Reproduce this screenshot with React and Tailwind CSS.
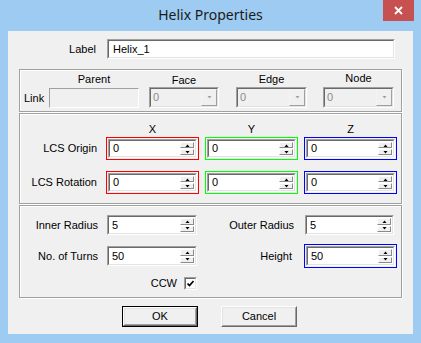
import React from "react";

const sunkenOuter = "border border-t-[#a0a0a0] border-l-[#a0a0a0] border-r-white border-b-white";
const sunkenInner = "border border-t-[#696969] border-l-[#696969] border-r-[#e3e3e3] border-b-[#e3e3e3]";
const etched = "border border-[#a0a0a0] shadow-[inset_1px_1px_0_#fff,1px_1px_0_#fff]";

const Arrow = ({ up, color = "#000" }) => (
  <svg width="5" height="3" viewBox="0 0 5 3">
    <polygon points={up ? "0.5,3 2.5,0.5 4.5,3" : "0.5,0 4.5,0 2.5,2.5"} fill={color} />
  </svg>
);

const SpinBtn = ({ up }) => (
  <div className="flex flex-1 items-center justify-center border border-t-white border-l-white border-r-[#8a8a8a] border-b-[#8a8a8a] bg-[#f0f0f0]">
    <Arrow up={up} />
  </div>
);

function SpinEdit({ value, className }) {
  return (
    <div className={`flex ${sunkenOuter} ${className}`}>
      <div className={`flex flex-1 bg-white ${sunkenInner}`}>
        <span className="flex flex-1 items-center pl-[3px]">{value}</span>
        <div className="flex w-[16px] flex-col gap-px p-px">
          <SpinBtn up />
          <SpinBtn />
        </div>
      </div>
    </div>
  );
}

// colour ring round a spin edit (red/green/blue axes)
function ColorBox({ value, ring, className }) {
  return (
    <div className={`flex w-[93px] border bg-[#f0f0f0] p-px ${ring} ${className}`}>
      <SpinEdit value={value} className="flex-1" />
    </div>
  );
}

function Combo() {
  return (
    <div className={`flex h-[21px] ${sunkenOuter}`}>
      <div className={`flex flex-1 bg-[#f0f0f0] ${sunkenInner}`}>
        <span className="flex flex-1 items-center pl-[2px] text-[#8a8a8a]">0</span>
        <div className="flex w-[16px] items-center justify-center border border-t-[#f4f4f4] border-l-[#f4f4f4] border-r-[#a0a0a0] border-b-[#a0a0a0] bg-[#f0f0f0]">
          <Arrow color="#a0a0a0" />
        </div>
      </div>
    </div>
  );
}

function Button({ children, isDefault }) {
  return (
    <div className={`h-[21px] w-[76px] ${isDefault ? "border border-black" : ""}`}>
      <div className="flex h-full border border-t-white border-l-white border-r-[#696969] border-b-[#696969]">
        <div className="flex flex-1 items-center justify-center border border-t-[#e3e3e3] border-l-[#e3e3e3] border-r-[#a0a0a0] border-b-[#a0a0a0] bg-[#f0f0f0]">
          {children}
        </div>
      </div>
    </div>
  );
}

export default function App() {
  return (
    <div className="flex h-[343px] w-[421px] flex-col bg-[#9dcbf2] font-['Liberation_Sans',Arial,sans-serif] text-[11px] leading-[13px] text-black">
      {/* title bar */}
      <div className="grid h-[31px] grid-cols-[1fr_auto_1fr]">
        <div />
        <div className="pt-[5px] font-['Noto_Sans',sans-serif] text-[14px] leading-[20px] text-[#1b1b1b]">
          Helix Properties
        </div>
        <div className="flex justify-end pr-[7px]">
          <div className="flex h-[21px] w-[31px] items-center justify-center bg-[#c75050]">
            <svg width="9" height="9" viewBox="0 0 9 9">
              <path d="M1 1 L8 8 M8 1 L1 8" stroke="#fff" strokeWidth="1.8" />
            </svg>
          </div>
        </div>
      </div>

      {/* client area */}
      <div className="mx-[8px] flex h-[303px] w-[405px] flex-col bg-[#f0f0f0]">
        <div className="mt-[8px] flex h-[20px] items-center">
          <span className="w-[88px] text-right">Label</span>
          <div className={`ml-[11px] flex h-[20px] w-[288px] ${sunkenOuter}`}>
            <div className={`flex flex-1 items-center bg-white pl-[4px] ${sunkenInner}`}>Helix_1</div>
          </div>
        </div>

        {/* link group */}
        <div className={`ml-[11px] mt-[10px] h-[43px] w-[383px] ${etched}`}>
          <div className="flex pl-[4px] pt-[2px]">
            <div className="flex w-[25px] flex-col">
              <div className="h-[15px]" />
              <div className="mt-[1px] flex h-[20px] items-center">Link</div>
            </div>
            <div className="flex w-[90px] flex-col">
              <div className="h-[15px] text-center leading-[15px]">Parent</div>
              <div className="mt-[1px] h-[20px] border border-t-[#a0a0a0] border-l-[#a0a0a0] border-r-white border-b-white bg-[#f0f0f0]" />
            </div>
            <div className="ml-[10px] flex w-[70px] flex-col">
              <div className="h-[15px] text-center leading-[17px]">Face</div>
              <Combo />
            </div>
            <div className="ml-[17px] flex w-[71px] flex-col">
              <div className="h-[15px] text-center leading-[15px]">Edge</div>
              <Combo />
            </div>
            <div className="ml-[16px] flex w-[71px] flex-col">
              <div className="h-[15px] text-center leading-[12px]">Node</div>
              <Combo />
            </div>
          </div>
        </div>

        {/* LCS group */}
        <div className={`ml-[11px] mt-[1px] h-[91px] w-[383px] ${etched}`}>
          <div className="flex flex-col pt-[8px]">
            <div className="flex h-[15px] gap-[6px] leading-[15px]">
              <div className="w-[80px]" />
              <div className="w-[93px] text-center">X</div>
              <div className="w-[93px] text-center">Y</div>
              <div className="w-[93px] text-center">Z</div>
            </div>
            <div className="flex h-[23px] items-center gap-[6px]">
              <span className="w-[80px] pr-[3px] text-right">LCS Origin</span>
              <ColorBox value="0" ring="border-[#ff0000]" className="h-[23px]" />
              <ColorBox value="0" ring="border-[#00ff00]" className="h-[23px]" />
              <ColorBox value="0" ring="border-[#0000ff]" className="h-[23px]" />
            </div>
            <div className="mt-[11px] flex h-[23px] items-center gap-[6px]">
              <span className="w-[80px] pr-[3px] text-right">LCS Rotation</span>
              <ColorBox value="0" ring="border-[#ff0000]" className="h-[23px]" />
              <ColorBox value="0" ring="border-[#00ff00]" className="h-[23px]" />
              <ColorBox value="0" ring="border-[#0000ff]" className="h-[23px]" />
            </div>
          </div>
        </div>

        {/* helix group */}
        <div className={`ml-[11px] mt-[1px] h-[93px] w-[383px] ${etched}`}>
          <div className="flex flex-col pt-[9px]">
            <div className="flex h-[20px] items-center">
              <span className="w-[87px] pr-[9px] text-right">Inner Radius</span>
              <SpinEdit value="5" className="h-[20px] w-[90px]" />
              <span className="w-[107px] pr-[10px] text-right">Outer Radius</span>
              <SpinEdit value="5" className="ml-[1px] h-[20px] w-[89px]" />
            </div>
            <div className="mt-[9px] flex h-[24px] items-center">
              <span className="w-[87px] pr-[9px] text-right">No. of Turns</span>
              <SpinEdit value="50" className="h-[20px] w-[90px]" />
              <span className="w-[107px] pr-[12px] text-right">Height</span>
              <ColorBox value="50" ring="border-[#0000ff]" className="h-[24px]" />
            </div>
            <div className="mt-[9px] flex h-[13px] items-center">
              <span className="w-[164px] pr-[7px] text-right">CCW</span>
              <div className={`flex h-[13px] w-[13px] ${sunkenOuter}`}>
                <div className={`flex flex-1 items-center justify-center bg-white ${sunkenInner}`}>
                  <svg width="7" height="7" viewBox="0 0 7 7">
                    <polyline points="0.5,3.5 2.5,5.5 6.5,1" fill="none" stroke="#000" strokeWidth="1.7" />
                  </svg>
                </div>
              </div>
            </div>
          </div>
        </div>

        <div className="mt-[8px] flex gap-[23px] pl-[114px]">
          <Button isDefault>OK</Button>
          <Button>Cancel</Button>
        </div>
      </div>
    </div>
  );
}
